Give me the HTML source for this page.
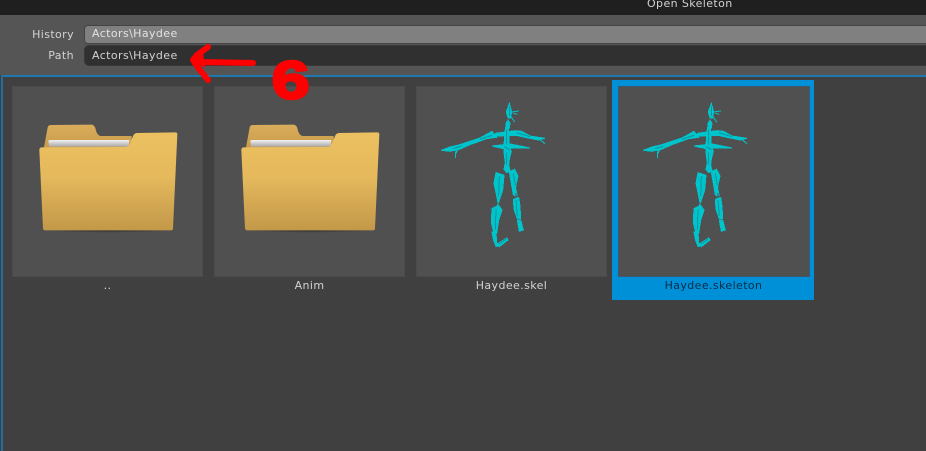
<!DOCTYPE html>
<html>
<head>
<meta charset="utf-8">
<style>
html,body{margin:0;padding:0;background:#404040;}
#r{position:relative;width:926px;height:451px;overflow:hidden;background:#404040;font-family:"DejaVu Sans","Liberation Sans",sans-serif;font-size:11px;color:#d2d2d2;letter-spacing:.4px;}
#r div{position:absolute;box-sizing:border-box;white-space:nowrap;}
.tile{width:191px;height:191px;top:86px;background:#505050;box-shadow:inset 0 0 0 1px #4b4b4b;}
.cap{top:279px;height:14px;line-height:14px;text-align:center;width:191px;}
svg{position:absolute;overflow:visible;}
</style>
</head>
<body>
<div id="r">
<div style="left:0;top:0;width:926px;height:15px;background:#1f1f1f;"></div>
<div style="left:647px;top:-3px;height:14px;line-height:14px;">Open Skeleton</div>
<div style="left:0;top:15px;width:926px;height:60px;background:#555;"></div>
<div style="left:0;top:27px;width:74px;text-align:right;height:15px;line-height:15px;">History</div>
<div style="left:0;top:48px;width:74px;text-align:right;height:15px;line-height:15px;">Path</div>
<div style="left:84px;top:25px;width:860px;height:19px;background:#808080;border:1px solid #444;border-radius:4px;padding-left:7px;line-height:16px;color:#e2e2e2;">Actors\Haydee</div>
<div style="left:84px;top:45px;width:860px;height:21px;background:#303030;border:1px solid #383838;border-radius:5px;padding-left:7px;line-height:19px;">Actors\Haydee</div>
<div style="left:2px;top:75px;width:924px;height:2px;background:#1f78ad;"></div>
<div style="left:1px;top:75px;width:2px;height:376px;background:#226f9e;"></div>

<div style="left:612px;top:80px;width:202px;height:220px;background:#0090d8;"></div>
<div class="tile" style="left:12px;"></div>
<div class="tile" style="left:214px;"></div>
<div class="tile" style="left:416px;"></div>
<div class="tile" style="left:618px;width:192px;box-shadow:inset 0 0 0 1px #3c5a6c;"></div>

<div class="cap" style="left:12px;">..</div>
<div class="cap" style="left:214px;">Anim</div>
<div class="cap" style="left:416px;">Haydee.skel</div>
<div class="cap" style="left:618px;color:#0b2c44;">Haydee.skeleton</div>

<svg width="0" height="0" style="position:absolute">
<defs>
<linearGradient id="fg" x1="0" y1="0" x2="0" y2="1"><stop offset="0" stop-color="#ecc160"/><stop offset=".45" stop-color="#e5b95c"/><stop offset="1" stop-color="#c39849"/></linearGradient>
<linearGradient id="bg" x1="0" y1="0" x2="0" y2="1"><stop offset="0" stop-color="#d9ad5c"/><stop offset="1" stop-color="#c99c4c"/></linearGradient>
<linearGradient id="pg" x1="0" y1="0" x2="0" y2="1"><stop offset="0" stop-color="#f2f2f2"/><stop offset="1" stop-color="#a8a8a8"/></linearGradient>
<radialGradient id="sh"><stop offset="0" stop-color="#222" stop-opacity=".8"/><stop offset="1" stop-color="#222" stop-opacity="0"/></radialGradient>
<g id="folder">
<rect x="66" y="352" width="398" height="16" rx="8" fill="url(#sh)"/>
<path d="M72 112L83 52Q85 45 93 45L214 44Q222 44 226 54Q230 76 242 78L335 78L335 115L72 115Z" fill="url(#bg)"/>
<path d="M85 94Q85 90 90 90L328 90L326 108Q326 110 322 110L88 110Z" fill="url(#pg)"/>
<path d="M64 112L316 111Q324 111 330 100L340 76Q344 69 352 69L466 67Q472 67 472 73L459 355Q459 361 453 361L76 361Q70 361 69 355L58 120Q58 113 64 112Z" fill="url(#fg)"/>
</g>
<g id="skel" shape-rendering="crispEdges">
<g fill="#00c4cc" stroke="#00c4cc" stroke-width="3">
<path d="M238 22L245 48L241 66L234 66L229 48Z"/>
<path d="M234 72L240 82L238 96L227 96L228 82Z"/>
<path d="M226 98L236 98L237 148L244 166L238 190L236 206L240 224L230 230L222 220L226 200L222 170L222 145Z"/>
<path d="M186 150L240 144L300 156L240 156L230 160Z"/>
<path d="M186 106L200 124L170 128L120 146L88 160L60 166L34 163L60 153L90 146L150 126Z"/>
<path d="M196 112L255 104L275 106L300 120L345 127L325 132L285 124L258 118L198 120Z"/>
<path d="M198 230L222 238L218 282L207 316L203 316L198 290L192 262Z"/>
<path d="M238 228L254 220L264 240L258 266L255 300L250 296L244 262Z"/>
<path d="M186 338L206 328L216 342L206 372L200 412L192 412L184 380Z"/>
<path d="M250 310L266 304L270 330L272 368L262 368L252 340Z"/>
<path d="M186 408L198 410L200 440L206 450L198 452L190 430Z"/>
<path d="M262 372L272 372L280 402L268 406Z"/>
<path d="M202 444L230 426L234 432L208 452Z"/>
</g>
<g fill="none" stroke="#00c4cc" stroke-width="3">
<path d="M245 48L267 45M250 52L262 55M240 58L255 79M78 158L76 186M90 150L78 172M325 127L345 143M247 232L262 300M206 316L202 330"/>
</g>
<g fill="none" stroke="#0897a0" stroke-width="3">
<path d="M238 30V60M230 100L230 146M222 152L240 162M186 118L150 130M95 150L70 158M260 110L300 122M208 240L206 300M250 232L256 268M198 340L196 400M258 312L262 360M230 170V205M205 445L228 430"/>
</g>
</g>
</defs>
</svg>

<svg style="left:20px;top:110px;" width="180" height="130" viewBox="0 0 540 390"><use href="#folder"/></svg>
<svg style="left:222px;top:110px;" width="180" height="130" viewBox="0 0 540 390"><use href="#folder"/></svg>
<svg style="left:430px;top:96px;" width="130" height="160" viewBox="0 0 390 480"><use href="#skel"/></svg>
<svg style="left:632px;top:96px;" width="130" height="160" viewBox="0 0 390 480"><use href="#skel"/></svg>

<svg style="left:0;top:0;" width="926" height="451" viewBox="0 0 926 451">
<path d="M208 47L197 55L193 60L199 69L208 80M193 60L200 62L253 63" fill="none" stroke="#fe0000" stroke-width="6" stroke-linecap="round" stroke-linejoin="round"/>
<path d="M191 60L203 52L205 68Z" fill="#fe0000"/>
<text x="0" y="0" transform="translate(270 98.5) scale(1.22 1)" font-family="Liberation Mono, monospace" font-weight="700" font-size="56" fill="#fe0000" stroke="#fe0000" stroke-width="2.5" stroke-linejoin="miter" style="letter-spacing:0">6</text>
</svg>
</div>
</body>
</html>
